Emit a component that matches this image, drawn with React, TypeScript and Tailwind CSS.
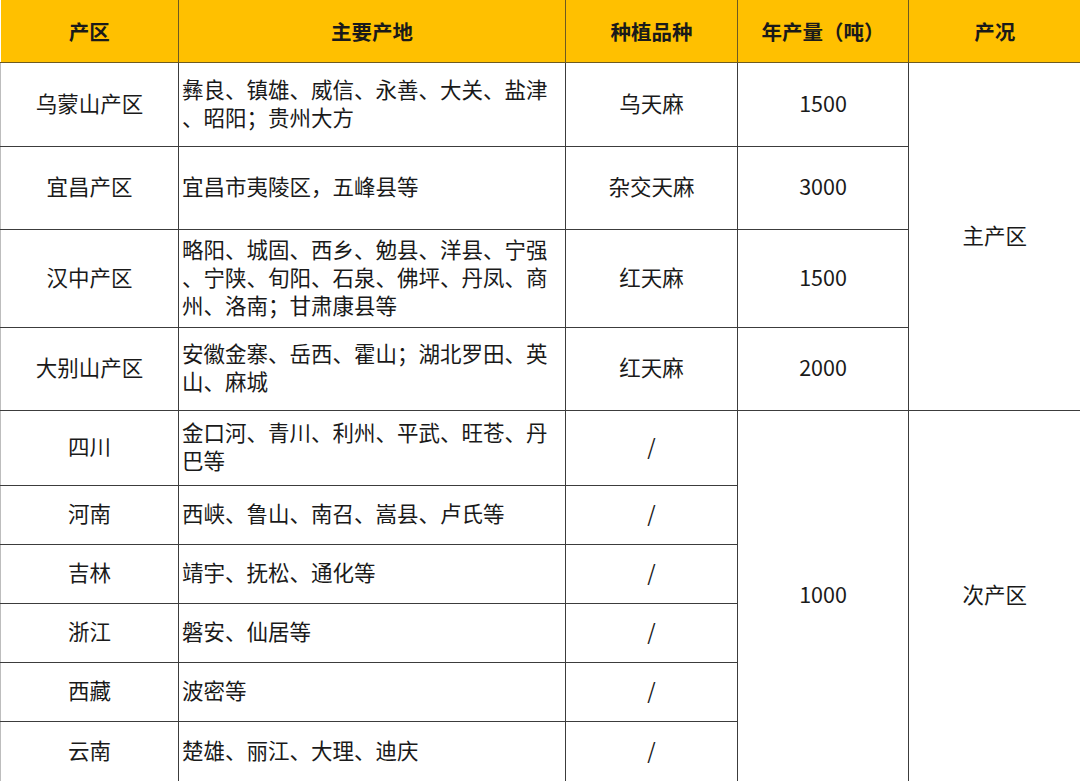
const font = { fontFamily: '"Noto Sans CJK SC", "Noto Sans", sans-serif' };

type Row = {
    h: string;
    area?: string;
    places: string[];
    kind: string;
};

const rows: Row[] = [
    { h: "h-[84px]", area: "乌蒙山产区", places: ["彝良、镇雄、威信、永善、大关、盐津", "、昭阳；贵州大方"], kind: "乌天麻" },
    { h: "h-[83px]", area: "宜昌产区", places: ["宜昌市夷陵区，五峰县等"], kind: "杂交天麻" },
    { h: "h-[98px]", area: "汉中产区", places: ["略阳、城固、西乡、勉县、洋县、宁强", "、宁陕、旬阳、石泉、佛坪、丹凤、商", "州、洛南；甘肃康县等"], kind: "红天麻" },
    { h: "h-[83px]", area: "大别山产区", places: ["安徽金寨、岳西、霍山；湖北罗田、英", "山、麻城"], kind: "红天麻" },
    { h: "h-[75px]", area: "四川", places: ["金口河、青川、利州、平武、旺苍、丹", "巴等"], kind: "/" },
    { h: "h-[59px]", area: "河南", places: ["西峡、鲁山、南召、嵩县、卢氏等"], kind: "/" },
    { h: "h-[59px]", area: "吉林", places: ["靖宇、抚松、通化等"], kind: "/" },
    { h: "h-[59px]", area: "浙江", places: ["磐安、仙居等"], kind: "/" },
    { h: "h-[59px]", area: "西藏", places: ["波密等"], kind: "/" },
    { h: "h-[60px]", area: "云南", places: ["楚雄、丽江、大理、迪庆"], kind: "/" },
];

const yields = ["1500", "3000", "1500", "2000"];

const cell = "border border-[#3c3c3c] p-0 pb-[3px] align-middle";

export default function App() {
    return (
        <div className="w-[1080px] h-[781px] bg-white overflow-hidden text-[#1a1a1a]" style={font}>
            <table className="border-collapse table-fixed w-[1080px] text-[21.5px] leading-[28px]">
                <colgroup>
                    <col className="w-[178px]" />
                    <col className="w-[387px]" />
                    <col className="w-[172px]" />
                    <col className="w-[171px]" />
                    <col className="w-[172px]" />
                </colgroup>
                <thead>
                    {/* HEADER */}
                    <tr className="h-[62px] bg-[#ffc000] font-bold text-[20.5px]">
                        <th className="border border-[#6e5a20] border-t-0 border-l-0">产区</th>
                        <th className="border border-[#6e5a20] border-t-0">主要产地</th>
                        <th className="border border-[#6e5a20] border-t-0">种植品种</th>
                        <th className="border border-[#6e5a20] border-t-0">年产量（吨）</th>
                        <th className="border border-[#6e5a20] border-t-0 border-r-0">产况</th>
                    </tr>
                </thead>
                <tbody>
                    {rows.map((r, i) => (
                        <tr key={i} className={r.h}>
                            <td className={`${cell} border-l-[#bdbdbd] text-center`}>{r.area}</td>
                            <td className={`${cell} pl-[3px] text-left whitespace-nowrap`}>
                                {r.places.map((p, j) => (
                                    <div key={j}>{p}</div>
                                ))}
                            </td>
                            <td className={`${cell} text-center`}>{r.kind}</td>
                            {i < 4 && <td className={`${cell} text-center`}>{yields[i]}</td>}
                            {i === 4 && (
                                <td rowSpan={6} className={`${cell} text-center`}>
                                    1000
                                </td>
                            )}
                            {i === 0 && (
                                <td rowSpan={4} className={`${cell} border-r-0 text-center`}>
                                    主产区
                                </td>
                            )}
                            {i === 4 && (
                                <td rowSpan={6} className={`${cell} border-r-0 text-center`}>
                                    次产区
                                </td>
                            )}
                        </tr>
                    ))}
                </tbody>
            </table>
        </div>
    );
}
